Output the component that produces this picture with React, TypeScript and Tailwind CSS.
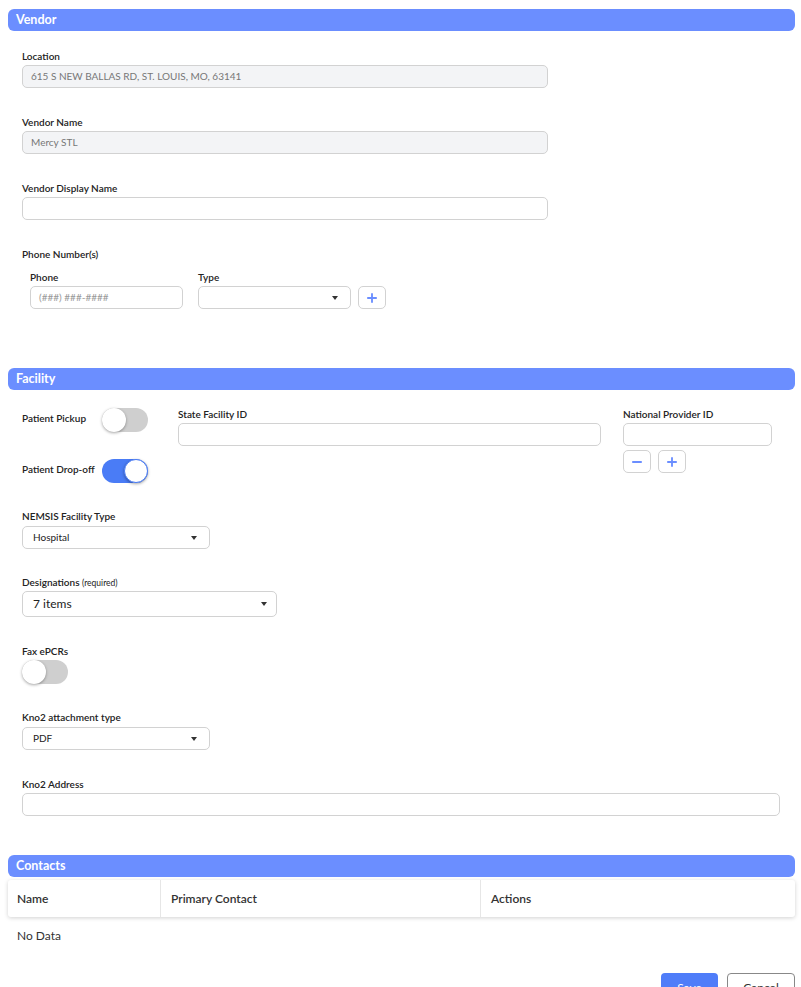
import React from "react";
import { Plus, Minus } from "lucide-react";

const font = { fontFamily: "Lato, 'Open Sans', sans-serif" };

function SectionHeader({ title, className = "" }: { title: string; className?: string }) {
  return (
    <div className={`h-[22px] rounded-[6px] bg-[#6b8eff] pl-[8px] flex items-center text-[12.5px] font-bold text-white ${className}`}>
      {title}
    </div>
  );
}

function Label({ children, className = "" }: { children: React.ReactNode; className?: string }) {
  return (
    <div className={`h-[13px] leading-[13px] text-[10px] font-semibold text-[#222] ${className}`}>
      {children}
    </div>
  );
}

function TextInput({ value, placeholder, disabled, className = "" }: { value?: string; placeholder?: string; disabled?: boolean; className?: string }) {
  return (
    <div
      className={`h-[23px] rounded-[5px] border border-[#d2d2d2] flex items-center px-[8px] text-[10px] ${disabled ? "bg-[#f3f4f6] text-[#777]" : "bg-white text-[#888]"} ${className}`}
    >
      {value ?? placeholder}
    </div>
  );
}

function Caret() {
  return (
    <span className="w-0 h-0 border-l-[3px] border-r-[3px] border-t-[4px] border-l-transparent border-r-transparent border-t-[#333]" />
  );
}

function Select({ value, className = "" }: { value?: string; className?: string }) {
  return (
    <div className={`h-[23px] rounded-[5px] border border-[#d2d2d2] bg-white flex items-center justify-between pl-[10px] pr-[12px] text-[10px] text-[#222] ${className}`}>
      <span>{value}</span>
      <Caret />
    </div>
  );
}

function IconButton({ children }: { children: React.ReactNode }) {
  return (
    <div className="w-[28px] h-[23px] rounded-[5px] border border-[#d2d2d2] bg-white flex items-center justify-center text-[#6b8eff]">
      {children}
    </div>
  );
}

function Toggle({ on }: { on?: boolean }) {
  return (
    <div
      className={`w-[46px] h-[24px] rounded-full flex items-center ${on ? "bg-[#4a7cf6] justify-end" : "bg-[#cfcfcf] justify-start"}`}
    >
      <div className={`w-[24px] h-[24px] rounded-full bg-white shadow-[0_1px_3px_rgba(0,0,0,0.35)] ${on ? "border border-[#4a7cf6]" : ""}`} />
    </div>
  );
}

export default function App() {
  return (
    <div style={font} className="w-[801px] h-[987px] bg-white overflow-hidden pl-2 pr-[6px] pt-[9px]">
      <SectionHeader title="Vendor" />
      <div className="pl-[14px]">
        <Label className="mt-[19px]">Location</Label>
        <TextInput disabled value="615 S NEW BALLAS RD, ST. LOUIS, MO, 63141" className="mt-[2px] w-[526px]" />

        <Label className="mt-[28px]">Vendor Name</Label>
        <TextInput disabled value="Mercy STL" className="mt-[2px] w-[526px]" />

        <Label className="mt-[28px]">Vendor Display Name</Label>
        <TextInput value="" className="mt-[2px] w-[526px]" />

        <Label className="mt-[28px] font-medium">Phone Number(s)</Label>
        <div className="mt-[10px] ml-[8px] flex items-end gap-[7px]">
          <div className="w-[153px]">
            <Label>Phone</Label>
            <TextInput placeholder="(###) ###-####" className="mt-[2px] text-[#999]" />
          </div>
          <div className="w-[153px] ml-[8px]">
            <Label>Type</Label>
            <Select className="mt-[2px]" />
          </div>
          <IconButton>
            <Plus size={14} strokeWidth={3.2} />
          </IconButton>
        </div>
      </div>

      <SectionHeader title="Facility" className="mt-[59px]" />
      <div className="pl-[14px]">
        <div className="mt-[18px] flex">
          <div className="flex flex-col gap-[27px]">
            <div className="flex items-center">
              <Label className="w-[80px] -mt-[4px]">Patient Pickup</Label>
              <Toggle />
            </div>
            <div className="flex items-center">
              <Label className="w-[80px] -mt-[4px]">Patient Drop-off</Label>
              <Toggle on />
            </div>
          </div>
          <div className="ml-[30px] w-[423px]">
            <Label>State Facility ID</Label>
            <TextInput value="" className="mt-[2px]" />
          </div>
          <div className="ml-[22px] w-[149px]">
            <Label>National Provider ID</Label>
            <TextInput value="" className="mt-[2px]" />
            <div className="mt-[4px] flex gap-[7px]">
              <IconButton>
                <Minus size={14} strokeWidth={3.2} />
              </IconButton>
              <IconButton>
                <Plus size={14} strokeWidth={3.2} />
              </IconButton>
            </div>
          </div>
        </div>

        <Label className="mt-[27px]">NEMSIS Facility Type</Label>
        <Select value="Hospital" className="mt-[3px] w-[188px]" />

        <Label className="mt-[27px]">
          Designations <span className="text-[8.5px] font-normal">(required)</span>
        </Label>
        <div className="mt-[2px] w-[255px] h-[26px] rounded-[5px] border border-[#d2d2d2] bg-white flex items-center justify-between pl-[10px] pr-[9px] text-[12px] text-[#222]">
          <span>7 items</span>
          <Caret />
        </div>

        <Label className="mt-[28px]">Fax ePCRs</Label>
        <div className="mt-[2px]">
          <Toggle />
        </div>

        <Label className="mt-[27px]">Kno2 attachment type</Label>
        <Select value="PDF" className="mt-[3px] w-[188px]" />

        <Label className="mt-[28px]">Kno2 Address</Label>
        <TextInput value="" className="mt-[2px] w-[758px]" />
      </div>

      <SectionHeader title="Contacts" className="mt-[39px]" />
      <div className="mt-[3px] h-[37px] rounded-[3px] bg-white shadow-[0_1px_4px_rgba(0,0,0,0.18)] grid grid-cols-[153px_320px_1fr] text-[12px] font-semibold text-[#333]">
        <div className="flex items-center pl-[9px] border-r border-[#e6e6e6]">Name</div>
        <div className="flex items-center pl-[10px] border-r border-[#e6e6e6]">Primary Contact</div>
        <div className="flex items-center pl-[10px]">Actions</div>
      </div>
      <div className="mt-[10px] pl-[9px] text-[12px] text-[#333]">No Data</div>

      <div className="mt-[28px] flex justify-end gap-[9px]">
        <button className="w-[57px] h-[30px] rounded-[4px] bg-[#4f7df9] text-white text-[12px]">Save</button>
        <button className="w-[68px] h-[30px] rounded-[4px] border border-[#888] bg-white text-[#333] text-[12px]">Cancel</button>
      </div>
    </div>
  );
}
